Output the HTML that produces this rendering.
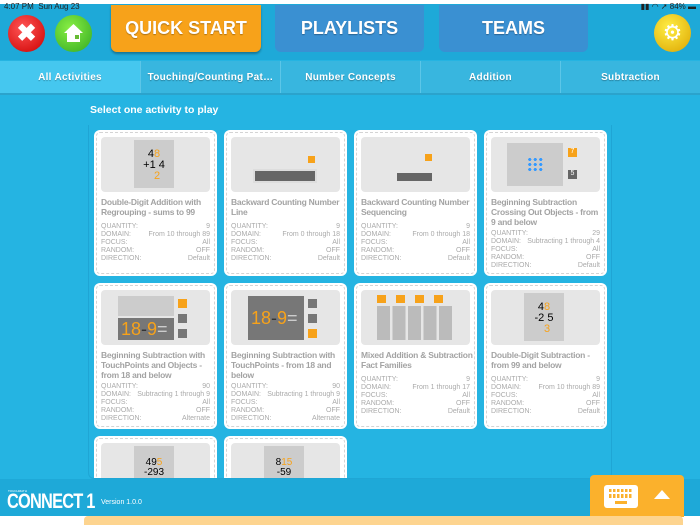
<!DOCTYPE html>
<html><head><meta charset="utf-8"><style>
*{margin:0;padding:0;box-sizing:border-box}
body{width:700px;height:525px;overflow:hidden;background:#fff;font-family:"Liberation Sans",sans-serif;position:relative}
.bg{position:absolute;left:0;top:0;width:700px;height:516px;background:#25b4e2}
.hdr{position:absolute;left:0;top:0;width:700px;height:60px;background:#1ea9d8}
.status{position:absolute;top:2px;font-size:8px;color:#222}
.btn{position:absolute;top:5px;height:47px;border-radius:0 0 6px 6px;color:#fff;font-weight:bold;font-size:18px;display:flex;align-items:center;justify-content:center;text-shadow:0 1px 1px rgba(0,0,0,.3)}
.tabs{position:absolute;left:0;top:61px;width:700px;height:34px;background:#38b6df;border-bottom:2px solid #2ba3cc}
.tab{position:absolute;top:0;height:32px;width:140px;border-left:1px solid #5cc6e8;color:#fff;font-weight:bold;font-size:10px;display:flex;align-items:center;justify-content:center;text-shadow:0 1px 1px rgba(0,0,0,.3);letter-spacing:.3px}
.grid{position:absolute;left:88px;top:125px;width:524px;height:354px;border:1px solid rgba(20,140,190,.35);border-top:none;border-radius:0 0 6px 6px;overflow:hidden}
.card{position:absolute;width:123px;height:146px;background:#fff;border-radius:6px;padding:2px}
.card .in{width:100%;height:100%;border:1px dashed #d4d4d4;border-radius:4px;padding:4px 4px;position:relative}
.th{height:55px;background:#e6e6e6;border-radius:4px;position:relative;overflow:hidden}
.tt{font-weight:bold;color:#a3a3a3;font-size:8.5px;letter-spacing:-0.25px;line-height:9.8px;margin-top:6px;margin-right:-4px}
.dl{margin-top:5px;font-size:7px;color:#aaa;line-height:8px}
.dl div{display:flex;justify-content:space-between}
.foot{position:absolute;left:0;top:479px;width:700px;height:37px;background:#1ea9d8}
</style></head><body>
<div class="bg"></div>
<div class="hdr"></div>
<div style="position:absolute;left:0;top:0;width:700px;height:4px;background:#fff"></div>
<div class="status" style="left:4px">4:07 PM&nbsp;&nbsp;Sun Aug 23</div>
<div class="status" style="right:4px">▮▮ ◠ ➚ 84% ▬</div>
<div style="position:absolute;left:8px;top:15px;width:37px;height:37px;border-radius:50%;background:radial-gradient(circle at 40% 35%,#f55,#c00);"></div>
<div style="position:absolute;left:8px;top:15px;width:37px;height:37px;color:#fff;font-size:24px;font-weight:bold;text-align:center;line-height:37px">✖</div>
<div style="position:absolute;left:55px;top:15px;width:37px;height:37px;border-radius:50%;background:radial-gradient(circle at 40% 35%,#8e4,#3a2);"></div>
<svg style="position:absolute;left:61px;top:21px" width="25" height="25" viewBox="0 0 25 25"><path d="M12.5 3L3 12h3v9h13v-9h3z" fill="#fff"/><rect x="14" y="14" width="4" height="4" fill="#6b3"/></svg>
<div class="btn" style="left:111px;width:150px;background:#f7a21a;box-shadow:0 2px 2px rgba(0,0,0,.3)">QUICK START</div>
<div class="btn" style="left:275px;width:149px;background:#3a90d2">PLAYLISTS</div>
<div class="btn" style="left:439px;width:149px;background:#3a90d2">TEAMS</div>
<div style="position:absolute;left:654px;top:14px;width:37px;height:38px;border-radius:50%;background:radial-gradient(circle at 40% 35%,#fe4,#dca400);"></div>
<div style="position:absolute;left:654px;top:14px;width:37px;height:38px;color:#fff;font-size:22px;text-align:center;line-height:38px">⚙</div>
<div class="tabs">
<div class="tab" style="left:0;background:#45c7ef;border-left:none">All Activities</div>
<div class="tab" style="left:140px">Touching/Counting Pat…</div>
<div class="tab" style="left:280px">Number Concepts</div>
<div class="tab" style="left:420px">Addition</div>
<div class="tab" style="left:560px">Subtraction</div>
</div>
<div style="position:absolute;left:90px;top:104px;color:#fff;font-weight:bold;font-size:10.5px">Select one activity to play</div>
<div class="grid">
<div class="card" style="left:5px;top:5px"><div class="in"><div class="th"><div style="position:absolute;left:33px;top:3px;width:40px;height:48px;background:#ccc;font-size:11px;text-align:center;line-height:11px;padding-top:9px">4<span style="color:#f7a21a">8</span><br>+1 4<br><span style="color:#f7a21a">&nbsp;&nbsp;2</span></div></div>
<div class="tt">Double-Digit Addition with Regrouping - sums to 99</div>
<div class="dl"><div><span>QUANTITY:</span><span>9</span></div><div><span>DOMAIN:</span><span>From 10 through 89</span></div><div><span>FOCUS:</span><span>All</span></div><div><span>RANDOM:</span><span>OFF</span></div><div><span>DIRECTION:</span><span>Default</span></div></div></div></div>
<div class="card" style="left:135px;top:5px"><div class="in"><div class="th"><div style="position:absolute;left:22px;top:32px;width:64px;height:14px;background:#666;border:2px solid #ddd"></div><div style="position:absolute;left:77px;top:19px;width:7px;height:7px;background:#f7a21a"></div></div>
<div class="tt">Backward Counting Number Line</div>
<div class="dl"><div><span>QUANTITY:</span><span>9</span></div><div><span>DOMAIN:</span><span>From 0 through 18</span></div><div><span>FOCUS:</span><span>All</span></div><div><span>RANDOM:</span><span>OFF</span></div><div><span>DIRECTION:</span><span>Default</span></div></div></div></div>
<div class="card" style="left:265px;top:5px"><div class="in"><div class="th"><div style="position:absolute;left:36px;top:36px;width:35px;height:8px;background:#666"></div><div style="position:absolute;left:64px;top:17px;width:7px;height:7px;background:#f7a21a"></div></div>
<div class="tt">Backward Counting Number Sequencing</div>
<div class="dl"><div><span>QUANTITY:</span><span>9</span></div><div><span>DOMAIN:</span><span>From 0 through 18</span></div><div><span>FOCUS:</span><span>All</span></div><div><span>RANDOM:</span><span>OFF</span></div><div><span>DIRECTION:</span><span>Default</span></div></div></div></div>
<div class="card" style="left:395px;top:5px"><div class="in"><div class="th"><div style="position:absolute;left:16px;top:6px;width:56px;height:43px;background:#ccc"></div><div style="position:absolute;left:36px;top:20px;width:16px;height:14px;background:radial-gradient(circle,#39f 40%,transparent 45%) 0 0/5.5px 5px"></div><div style="position:absolute;left:77px;top:11px;width:9px;height:9px;background:#f7a21a;color:#fff;font-size:7px;text-align:center">7</div><div style="position:absolute;left:77px;top:33px;width:9px;height:9px;background:#666;color:#fff;font-size:7px;text-align:center">5</div></div>
<div class="tt">Beginning Subtraction Crossing Out Objects - from 9 and below</div>
<div class="dl" style="margin-top:3px"><div><span>QUANTITY:</span><span>29</span></div><div><span>DOMAIN:</span><span>Subtracting 1 through 4</span></div><div><span>FOCUS:</span><span>All</span></div><div><span>RANDOM:</span><span>OFF</span></div><div><span>DIRECTION:</span><span>Default</span></div></div></div></div>
<div class="card" style="left:5px;top:158px"><div class="in"><div class="th"><div style="position:absolute;left:17px;top:6px;width:56px;height:20px;background:#ccc"></div><div style="position:absolute;left:17px;top:28px;width:56px;height:22px;background:#777;color:#f7a21a;font-size:18px;line-height:22px;padding-left:3px">18<span style="color:#333">-</span>9<span style="color:#ccc">=</span></div><div style="position:absolute;left:77px;top:9px;width:9px;height:9px;background:#f7a21a"></div><div style="position:absolute;left:77px;top:24px;width:9px;height:9px;background:#777"></div><div style="position:absolute;left:77px;top:39px;width:9px;height:9px;background:#777"></div></div>
<div class="tt">Beginning Subtraction with TouchPoints and Objects - from 18 and below</div>
<div class="dl" style="margin-top:3px"><div><span>QUANTITY:</span><span>90</span></div><div><span>DOMAIN:</span><span>Subtracting 1 through 9</span></div><div><span>FOCUS:</span><span>All</span></div><div><span>RANDOM:</span><span>OFF</span></div><div><span>DIRECTION:</span><span>Alternate</span></div></div></div></div>
<div class="card" style="left:135px;top:158px"><div class="in"><div class="th"><div style="position:absolute;left:17px;top:6px;width:56px;height:44px;background:#777;color:#f7a21a;font-size:18px;line-height:44px;padding-left:3px">18<span style="color:#333">-</span>9<span style="color:#ccc">=</span></div><div style="position:absolute;left:77px;top:9px;width:9px;height:9px;background:#777"></div><div style="position:absolute;left:77px;top:24px;width:9px;height:9px;background:#777"></div><div style="position:absolute;left:77px;top:39px;width:9px;height:9px;background:#f7a21a"></div></div>
<div class="tt">Beginning Subtraction with TouchPoints - from 18 and below</div>
<div class="dl" style="margin-top:3px"><div><span>QUANTITY:</span><span>90</span></div><div><span>DOMAIN:</span><span>Subtracting 1 through 9</span></div><div><span>FOCUS:</span><span>All</span></div><div><span>RANDOM:</span><span>OFF</span></div><div><span>DIRECTION:</span><span>Alternate</span></div></div></div></div>
<div class="card" style="left:265px;top:158px"><div class="in"><div class="th"><div style="position:absolute;left:16px;top:5px;width:76px;height:8px;background:repeating-linear-gradient(90deg,#f7a21a 0 9px,transparent 9px 19px)"></div><div style="position:absolute;left:16px;top:16px;width:76px;height:34px;background:repeating-linear-gradient(90deg,#bbb 0 13px,transparent 13px 15.5px)"></div></div>
<div class="tt">Mixed Addition &amp; Subtraction Fact Families</div>
<div class="dl"><div><span>QUANTITY:</span><span>9</span></div><div><span>DOMAIN:</span><span>From 1 through 17</span></div><div><span>FOCUS:</span><span>All</span></div><div><span>RANDOM:</span><span>OFF</span></div><div><span>DIRECTION:</span><span>Default</span></div></div></div></div>
<div class="card" style="left:395px;top:158px"><div class="in"><div class="th"><div style="position:absolute;left:33px;top:3px;width:40px;height:48px;background:#ccc;font-size:11px;text-align:center;line-height:11px;padding-top:9px">4<span style="color:#f7a21a">8</span><br>-2 5<br><span style="color:#f7a21a">&nbsp;&nbsp;3</span></div></div>
<div class="tt">Double-Digit Subtraction - from 99 and below</div>
<div class="dl"><div><span>QUANTITY:</span><span>9</span></div><div><span>DOMAIN:</span><span>From 10 through 89</span></div><div><span>FOCUS:</span><span>All</span></div><div><span>RANDOM:</span><span>OFF</span></div><div><span>DIRECTION:</span><span>Default</span></div></div></div></div>
<div class="card" style="left:5px;top:311px"><div class="in"><div class="th"><div style="position:absolute;left:33px;top:3px;width:40px;height:48px;background:#ccc;font-size:10px;text-align:center;line-height:10px;padding-top:12px">49<span style="color:#f7a21a">5</span><br>-293</div></div></div></div>
<div class="card" style="left:135px;top:311px"><div class="in"><div class="th"><div style="position:absolute;left:33px;top:3px;width:40px;height:48px;background:#ccc;font-size:10px;text-align:center;line-height:10px;padding-top:12px">8<span style="color:#f7a21a">15</span><br>-59</div></div></div></div>
</div>
<div class="foot"></div>
<div style="position:absolute;left:7px;top:490px;color:#fff;font-weight:bold;font-size:21px;letter-spacing:-1px;transform:scaleX(.78);transform-origin:0 0;white-space:nowrap">CONNECT 1</div>
<div style="position:absolute;left:8px;top:489px;color:#fff;font-size:3px">TOUCHMATH</div>
<div style="position:absolute;left:101px;top:499px;color:#fff;font-size:7px">Version 1.0.0</div>
<div style="position:absolute;left:590px;top:475px;width:94px;height:42px;background:#fbb12c;border-radius:4px 4px 0 0"></div>
<div style="position:absolute;left:604px;top:485px;width:34px;height:23px;background:#fff;border-radius:3px"></div>
<div style="position:absolute;left:609px;top:489px;width:24px;height:9px;background:repeating-linear-gradient(90deg,#fbb12c 0 2.5px,transparent 2.5px 4px),transparent;"></div>
<div style="position:absolute;left:609px;top:492px;width:24px;height:2px;background:#fff"></div>
<div style="position:absolute;left:615px;top:501px;width:12px;height:3px;background:#fbb12c"></div>
<div style="position:absolute;left:654px;top:490px;width:0;height:0;border-left:8px solid transparent;border-right:8px solid transparent;border-bottom:9px solid #fff"></div>
<div style="position:absolute;left:84px;top:516px;width:599px;height:9px;background:#fdd48f;border-radius:4px 4px 0 0"></div>
</body></html>
